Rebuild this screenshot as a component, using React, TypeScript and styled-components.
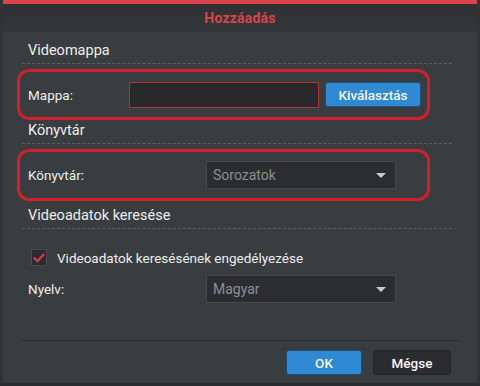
import React from 'react';
import styled, { createGlobalStyle } from 'styled-components';

const GlobalStyle = createGlobalStyle`
  html, body {
    margin: 0;
    padding: 0;
    background: #3a3d40;
  }
  body {
    font-family: Roboto, "Noto Sans", sans-serif;
  }
`;

const Dialog = styled.div`
  width: 480px;
  height: 386px;
  box-sizing: border-box;
  background: #3a3d40;
  border-left: 3px solid #303234;
  border-right: 3px solid #303234;
  border-bottom: 3px solid #2a2c2e;
  display: flex;
  flex-direction: column;
  overflow: hidden;
`;

const TopStripe = styled.div`
  height: 4px;
  background: #d9444c;
  margin: 0 -3px;
`;

const TitleBar = styled.div`
  height: 27px;
  display: flex;
  align-items: center;
  justify-content: center;
  background: linear-gradient(#2e3033, #35383b);
  border-bottom: 1px solid #33363a;
`;

const Title = styled.h1`
  margin: 0;
  font-size: 14px;
  font-weight: 700;
  color: #d9434d;
  letter-spacing: 0.2px;
`;

const Body = styled.div`
  flex: 1;
  display: flex;
  flex-direction: column;
  padding-left: 14px;
`;

const SectionHead = styled.div<{ $top: number }>`
  margin-top: ${p => p.$top}px;
  margin-left: 5px;
  width: 430px;
  height: 24px;
  box-sizing: border-box;
  border-bottom: 1px dashed #5d6064;
  padding-left: 6px;
  font-size: 14.5px;
  color: #eceded;
  line-height: 22px;
`;

const Highlight = styled.div<{ $height: number }>`
  margin-top: 5px;
  width: 413px;
  height: ${p => p.$height}px;
  box-sizing: border-box;
  border: 3px solid #d11f2c;
  border-radius: 12px;
  display: flex;
  align-items: center;
  padding-left: 8px;
`;

const Label = styled.span<{ $width: number }>`
  width: ${p => p.$width}px;
  flex-shrink: 0;
  font-size: 13.5px;
  color: #eceded;
`;

const TextInput = styled.div`
  width: 190px;
  height: 26px;
  box-sizing: border-box;
  background: #26282a;
  border: 1px solid #b43236;
`;

const Button = styled.button<{ $primary?: boolean; $width: number }>`
  width: ${p => p.$width}px;
  height: 25px;
  box-sizing: border-box;
  border-radius: 3px;
  border: 1px solid ${p => (p.$primary ? '#1d4f7a' : '#222426')};
  background: ${p => (p.$primary ? '#2f89d3' : '#2a2c2f')};
  color: #f4f6f8;
  font-family: Roboto, "Noto Sans", sans-serif;
  font-size: 13.5px;
  font-weight: 500;
  padding: 0;
  cursor: pointer;
`;

const Select = styled.div`
  width: 190px;
  height: 28px;
  box-sizing: border-box;
  background: #2b2d30;
  border: 1px solid #45484c;
  display: flex;
  align-items: center;
  justify-content: space-between;
  padding: 0 9px 0 6px;
  font-size: 14px;
  color: #8b8e92;
`;

const Caret = styled.span`
  width: 0;
  height: 0;
  border-left: 5px solid transparent;
  border-right: 5px solid transparent;
  border-top: 5px solid #c8cacc;
`;

const PlainRow = styled.div<{ $top: number }>`
  margin-top: ${p => p.$top}px;
  padding-left: 11px;
  display: flex;
  align-items: center;
`;

const CheckBox = styled.span`
  width: 16px;
  height: 17px;
  box-sizing: border-box;
  background: #2a2c2f;
  border: 1px solid #4a4d51;
  display: flex;
  align-items: center;
  justify-content: center;
  margin-left: 3px;
  margin-right: 10px;
`;

const CheckLabel = styled.span`
  font-size: 13.5px;
  color: #eceded;
`;

const Footer = styled.div`
  margin-top: auto;
  margin-left: 5px;
  width: 439px;
  border-top: 1px solid #2c2e31;
  display: flex;
  justify-content: flex-end;
  gap: 11px;
  padding: 9px 0 8px;
  box-sizing: border-box;
  padding-right: 10px;
`;

export default function App() {
  return (
    <>
      <GlobalStyle />
      <Dialog>
        <TopStripe />
        <TitleBar>
          <Title>Hozzáadás</Title>
        </TitleBar>
        <Body>
          <SectionHead $top={8}>Videomappa</SectionHead>
          <Highlight $height={51}>
            <Label $width={101}>Mappa:</Label>
            <TextInput />
            <Button $primary $width={96} style={{ marginLeft: 6 }}>
              Kiválasztás
            </Button>
          </Highlight>

          <SectionHead $top={0}>Könyvtár</SectionHead>
          <Highlight $height={52}>
            <Label $width={178}>Könyvtár:</Label>
            <Select>
              Sorozatok
              <Caret />
            </Select>
          </Highlight>

          <SectionHead $top={4}>Videoadatok keresése</SectionHead>
          <PlainRow $top={20}>
            <CheckBox>
              <svg width="12" height="10" viewBox="0 0 12 10">
                <path d="M1.5 5.2 L4.5 8.2 L10.5 1.5" fill="none" stroke="#e0354a" strokeWidth="2.2" strokeLinecap="round" strokeLinejoin="round" />
              </svg>
            </CheckBox>
            <CheckLabel>Videoadatok keresésének engedélyezése</CheckLabel>
          </PlainRow>
          <PlainRow $top={9}>
            <Label $width={178}>Nyelv:</Label>
            <Select>
              Magyar
              <Caret />
            </Select>
          </PlainRow>

          <Footer>
            <Button $primary $width={76}>OK</Button>
            <Button $width={78}>Mégse</Button>
          </Footer>
        </Body>
      </Dialog>
    </>
  );
}
